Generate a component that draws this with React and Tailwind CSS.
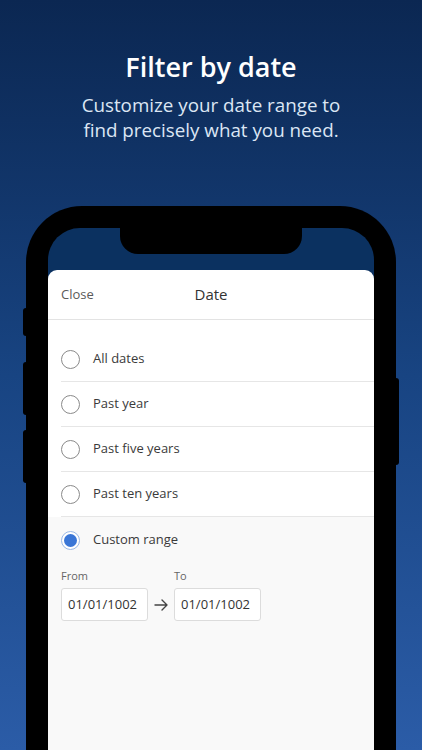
export default function App() {
  const options = ['All dates', 'Past year', 'Past five years', 'Past ten years']

  return (
    <div
      className="relative w-[422px] h-[750px] overflow-hidden bg-gradient-to-b from-[#0b2752] via-[#184482] to-[#2b5ca7]"
      style={{ fontFamily: '"Open Sans", "Noto Sans", sans-serif' }}
    >
      {/* Headline */}
      <div className="pt-[48px] text-center">
        <h1 className="text-[27px] leading-[38px] font-semibold text-white">Filter by date</h1>
        <p className="mt-[7px] text-[18.8px] leading-[25px] text-[#dce6f4]">
          Customize your date range to
          <br />
          find precisely what you need.
        </p>
      </div>

      {/* Phone */}
      <div className="relative mx-[26px] mt-[63px] h-[600px] rounded-t-[56px] bg-black px-[22px] pt-[22px]">
        {/* side buttons */}
        <div className="absolute left-[-3px] top-[102px] h-[28px] w-[3px] rounded-l-sm bg-black" />
        <div className="absolute left-[-3px] top-[156px] h-[53px] w-[3px] rounded-l-sm bg-black" />
        <div className="absolute left-[-3px] top-[224px] h-[53px] w-[3px] rounded-l-sm bg-black" />
        <div className="absolute right-[-3px] top-[172px] h-[87px] w-[3px] rounded-r-sm bg-black" />

        <div className="relative h-full overflow-hidden rounded-t-[32px] bg-[#0b3160] pt-[42px]">
          {/* notch */}
          <div className="absolute left-[72px] top-0 h-[26px] w-[182px] rounded-b-[18px] bg-black" />

          {/* Sheet */}
          <div className="flex h-full flex-col overflow-hidden rounded-t-[9px] bg-white">
            <div className="relative flex h-[50px] shrink-0 items-center border-b border-[#e3e3e3] px-[13px]">
              <span className="text-[13px] text-[#5a5a5a]">Close</span>
              <span className="absolute left-0 right-0 text-center text-[15px] text-[#333] pointer-events-none">
                Date
              </span>
            </div>

            <div className="pt-[17px]">
              {options.map((o) => (
                <div key={o} className="ml-[13px] flex h-[45px] items-center border-b border-[#e6e6e6]">
                  <span className="h-[19px] w-[19px] rounded-full border-[1.5px] border-[#8a8a8a]" />
                  <span className="ml-[13px] text-[13px] text-[#3a3a3a]">{o}</span>
                </div>
              ))}
            </div>

            <div className="flex-1 bg-[#f9f9f9] px-[13px]">
              <div className="flex h-[46px] items-center">
                <span className="flex h-[19px] w-[19px] items-center justify-center rounded-full border-[1.5px] border-[#9bb9e6] bg-white">
                  <span className="h-[13px] w-[13px] rounded-full bg-[#3a76d6]" />
                </span>
                <span className="ml-[13px] text-[13px] text-[#3a3a3a]">Custom range</span>
              </div>

              <div className="mt-[5px] flex items-end">
                <div>
                  <div className="text-[11px] leading-[16px] text-[#666]">From</div>
                  <div className="mt-[4px] flex h-[33px] w-[87px] items-center rounded-[3px] border border-[#dcdcdc] bg-white pl-[6px] text-[13px] text-[#333]">
                    01/01/1002
                  </div>
                </div>
                <div className="flex h-[33px] w-[26px] items-center justify-center">
                  <svg width="14" height="12" viewBox="0 0 14 12" fill="none" stroke="#444" strokeWidth="1.4" strokeLinecap="round" strokeLinejoin="round">
                    <path d="M1 6h12M8 1l5 5-5 5" />
                  </svg>
                </div>
                <div>
                  <div className="text-[11px] leading-[16px] text-[#666]">To</div>
                  <div className="mt-[4px] flex h-[33px] w-[87px] items-center rounded-[3px] border border-[#dcdcdc] bg-white pl-[6px] text-[13px] text-[#333]">
                    01/01/1002
                  </div>
                </div>
              </div>
            </div>
          </div>
        </div>
      </div>
    </div>
  )
}
